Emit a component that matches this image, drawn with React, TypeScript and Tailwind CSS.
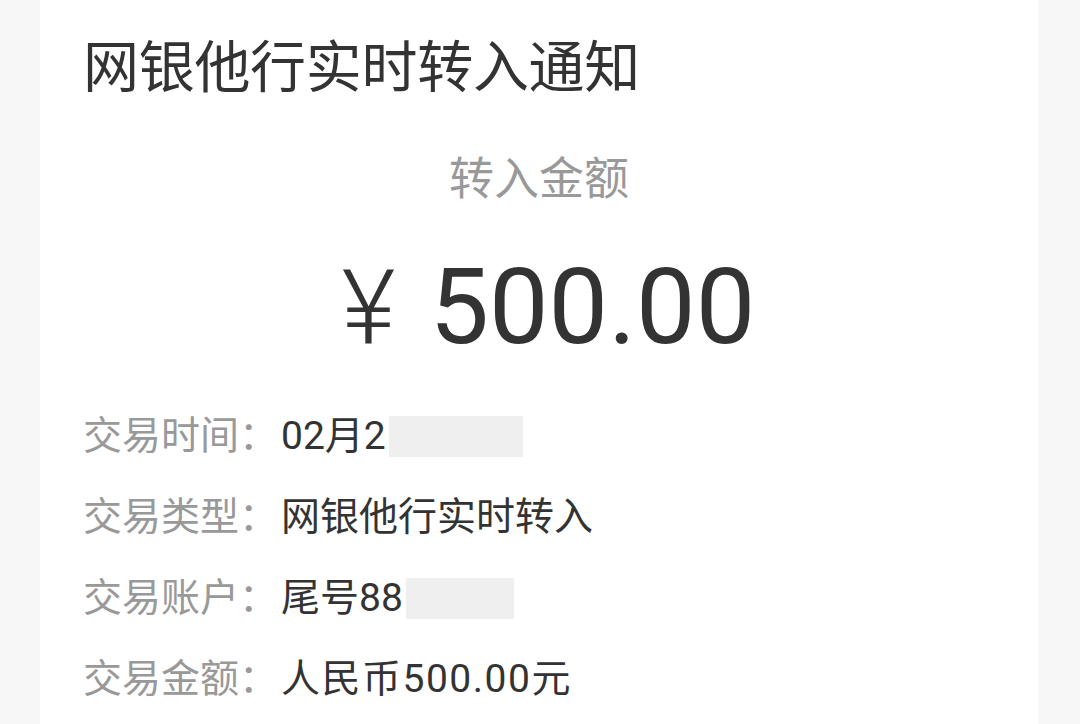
const font = { fontFamily: 'Roboto, "Noto Sans CJK SC", sans-serif' };

const rows: { label: string; value: string; mask?: number; wide?: boolean }[] = [
  { label: '交易时间：', value: '02月2', mask: 134 },
  { label: '交易类型：', value: '网银他行实时转入' },
  { label: '交易账户：', value: '尾号88', mask: 108 },
  { label: '交易金额：', value: '人民币500.00元', wide: true },
];

export default function App() {
  return (
    <div className="h-[724px] w-[1080px] overflow-hidden bg-[#f7f7f7]" style={font}>
      <div className="ml-[40px] h-full w-[998px] bg-white pl-[43px] pt-[40px]">
        <h1 className="text-[56px] leading-[56px] font-normal tracking-[-0.3px] text-[#333333]">网银他行实时转入通知</h1>

        <div className="mt-[59px] pr-[43px] text-center text-[45px] leading-[50px] text-[#999999]">转入金额</div>

        <div className="mt-[50px] flex items-baseline justify-center pr-[24px] text-[#333333]">
          <span className="text-[104px] leading-[104px] font-light">¥</span>
          <span className="ml-[34px] text-[106px] leading-[104px]">500.00</span>
        </div>

        <div className="mt-[36px] flex flex-col">
          {rows.map((r) => (
            <div key={r.label} className="flex h-[81px] items-center text-[39px]">
              <span className="text-[#999999]">{r.label}</span>
              <span className={r.wide ? 'ml-[3px] tracking-[1.5px] text-[#333333]' : 'ml-[3px] text-[#333333]'}>{r.value}</span>
              {r.mask && <span className="ml-[3px] h-[41px] bg-[#efefef]" style={{ width: r.mask }} />}
            </div>
          ))}
        </div>
      </div>
    </div>
  );
}
